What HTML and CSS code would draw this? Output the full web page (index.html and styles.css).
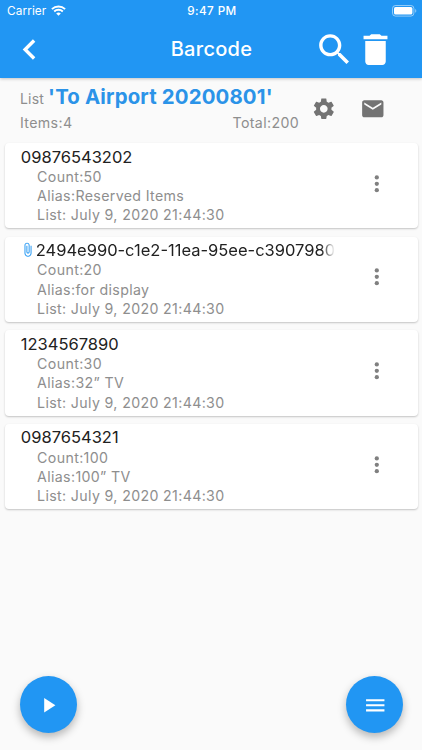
FILE: index.html
```html
<!DOCTYPE html>
<html lang="en">
<head>
    <meta charset="UTF-8">
    <meta name="viewport" content="width=device-width, initial-scale=1.0">
    <title>Barcode</title>
    <link rel="stylesheet" href="styles.css">
</head>
<body>
    <header class="header">
        <div class="status">
            <div class="carrier">
                <span>Carrier</span>
                <svg class="wifi" viewBox="0 0 15 11">
                    <path d="M.9 4.1a9.5 9.5 0 0 1 13.2 0M3.2 6.5a6.2 6.2 0 0 1 8.6 0" fill="none" stroke="#fff" stroke-width="1.9"/>
                    <path d="M7.5 10.8L5.2 8.5a3.3 3.3 0 0 1 4.6 0z" fill="#fff"/>
                </svg>
            </div>
            <div class="clock">9:47 PM</div>
            <div class="power">
                <svg class="battery" viewBox="0 0 25 12">
                    <rect x=".5" y=".5" width="21.4" height="10.6" rx="3" fill="none" stroke="#fff" stroke-opacity=".5"/>
                    <rect x="2" y="2" width="18.4" height="7.6" rx="1.6" fill="#fff"/>
                    <path d="M23.2 4v3.8c1.5-.6 1.5-3.2 0-3.8z" fill="#fff" fill-opacity=".5"/>
                </svg>
            </div>
        </div>
        <div class="toolbar">
            <svg class="icon-big" viewBox="0 0 24 24"><path d="M15.41 7.41L14 6l-6 6 6 6 1.41-1.41L10.83 12z"/></svg>
            <h1 class="title">Barcode</h1>
            <div class="actions">
                <svg class="icon-big" viewBox="0 0 24 24"><path d="M15.5 14h-.79l-.28-.27C15.41 12.59 16 11.11 16 9.5 16 5.91 13.09 3 9.5 3S3 5.91 3 9.5 5.91 16 9.5 16c1.61 0 3.09-.59 4.23-1.57l.27.28v.79l5 4.99L20.49 19l-4.99-5zm-6 0C7.01 14 5 11.99 5 9.5S7.01 5 9.5 5 14 7.01 14 9.5 11.99 14 9.5 14z"/></svg>
                <svg class="icon-big" viewBox="0 0 24 24"><path d="M6 19c0 1.1.9 2 2 2h8c1.1 0 2-.9 2-2V7H6v12zM19 4h-3.5l-1-1h-5l-1 1H5v2h14V4z"/></svg>
            </div>
        </div>
    </header>

    <section class="summary">
        <div class="summary-text">
            <div class="list-name"><span class="label">List</span><span class="name">'To Airport 20200801'</span></div>
            <div class="totals"><span>Items:4</span><span>Total:200</span></div>
        </div>
        <svg class="icon gear" viewBox="0 0 24 24"><path d="M19.14 12.94c.04-.3.06-.61.06-.94 0-.32-.02-.64-.07-.94l2.03-1.58c.18-.14.23-.41.12-.61l-1.92-3.32c-.12-.22-.37-.29-.59-.22l-2.39.96c-.5-.38-1.03-.7-1.62-.94l-.36-2.54c-.04-.24-.24-.41-.48-.41h-3.84c-.24 0-.43.17-.47.41l-.36 2.54c-.59.24-1.13.57-1.62.94l-2.39-.96c-.22-.08-.47 0-.59.22L2.74 8.87c-.12.21-.08.47.12.61l2.03 1.58c-.05.3-.09.63-.09.94s.02.64.07.94l-2.03 1.58c-.18.14-.23.41-.12.61l1.92 3.32c.12.22.37.29.59.22l2.39-.96c.5.38 1.03.7 1.62.94l.36 2.54c.05.24.24.41.48.41h3.84c.24 0 .44-.17.47-.41l.36-2.54c.59-.24 1.13-.56 1.62-.94l2.39.96c.22.08.47 0 .59-.22l1.92-3.32c.12-.22.07-.47-.12-.61l-2.01-1.58zM12 15.6c-1.98 0-3.6-1.62-3.6-3.6s1.62-3.6 3.6-3.6 3.6 1.62 3.6 3.6-1.62 3.6-3.6 3.6z"/></svg>
        <svg class="icon mail" viewBox="0 0 24 24"><path d="M20 4H4c-1.1 0-1.99.9-1.99 2L2 18c0 1.1.9 2 2 2h16c1.1 0 2-.9 2-2V6c0-1.1-.9-2-2-2zm0 4l-8 5-8-5V6l8 5 8-5v2z"/></svg>
    </section>

    <main class="cards">
        <article class="card">
            <div class="info">
                <div class="code">09876543202</div>
                <div class="detail">Count:50</div>
                <div class="detail">Alias:Reserved Items</div>
                <div class="detail">List: July 9, 2020 21:44:30</div>
            </div>
            <svg class="icon more" viewBox="0 0 24 24"><circle cx="12" cy="6" r="2"/><circle cx="12" cy="12" r="2"/><circle cx="12" cy="18" r="2"/></svg>
        </article>
        <article class="card">
            <div class="info">
                <div class="code attached">
                    <svg class="clip" viewBox="0 0 24 24"><path d="M16.5 6v11.5c0 2.21-1.79 4-4 4s-4-1.79-4-4V5c0-1.38 1.12-2.5 2.5-2.5s2.5 1.12 2.5 2.5v10.5c0 .55-.45 1-1 1s-1-.45-1-1V6H10v9.5c0 1.38 1.12 2.5 2.5 2.5s2.5-1.12 2.5-2.5V5c0-2.21-1.79-4-4-4S7 2.79 7 5v12.5c0 3.04 2.46 5.5 5.5 5.5s5.5-2.46 5.5-5.5V6h-1.5z"/></svg>
                    <span class="fade">2494e990-c1e2-11ea-95ee-c3907980</span>
                </div>
                <div class="detail">Count:20</div>
                <div class="detail">Alias:for display</div>
                <div class="detail">List: July 9, 2020 21:44:30</div>
            </div>
            <svg class="icon more" viewBox="0 0 24 24"><circle cx="12" cy="6" r="2"/><circle cx="12" cy="12" r="2"/><circle cx="12" cy="18" r="2"/></svg>
        </article>
        <article class="card">
            <div class="info">
                <div class="code">1234567890</div>
                <div class="detail">Count:30</div>
                <div class="detail">Alias:32” TV</div>
                <div class="detail">List: July 9, 2020 21:44:30</div>
            </div>
            <svg class="icon more" viewBox="0 0 24 24"><circle cx="12" cy="6" r="2"/><circle cx="12" cy="12" r="2"/><circle cx="12" cy="18" r="2"/></svg>
        </article>
        <article class="card">
            <div class="info">
                <div class="code">0987654321</div>
                <div class="detail">Count:100</div>
                <div class="detail">Alias:100” TV</div>
                <div class="detail">List: July 9, 2020 21:44:30</div>
            </div>
            <svg class="icon more" viewBox="0 0 24 24"><circle cx="12" cy="6" r="2"/><circle cx="12" cy="12" r="2"/><circle cx="12" cy="18" r="2"/></svg>
        </article>
    </main>

    <footer class="buttons">
        <button class="fab"><svg class="icon" viewBox="0 0 24 24"><path d="M8 5v14l11-7z"/></svg></button>
        <button class="fab"><svg class="icon" viewBox="0 0 24 24"><path d="M3 18h18v-2H3v2zm0-5h18v-2H3v2zm0-7v2h18V6H3z"/></svg></button>
    </footer>
</body>
</html>
```
FILE: styles.css
```css
* {
    box-sizing: border-box;
}
body {
    display: flex;
    flex-direction: column;
    height: 750px;
    margin: 0;
    overflow: hidden;
    font-family: Inter, "Liberation Sans", sans-serif;
    background-color: #fafafa;
}
svg {
    display: block;
    flex: none;
}
.header {
    height: 77.5px;
    color: #fff;
    background: #2196f3;
    box-shadow: 0 1px 3px rgba(0, 0, 0, 0.22);
}
.status {
    display: grid;
    grid-template-columns: 1fr auto 1fr;
    align-items: center;
    height: 22px;
    padding: 0 5px 0 7px;
    font-size: 11.8px;
}
.carrier {
    display: flex;
    align-items: center;
    gap: 5px;
    letter-spacing: 0.1px;
}
.wifi {
    width: 15px;
    height: 11px;
    margin-top: -2px;
}
.clock {
    font-weight: 500;
    font-size: 11.7px;
    letter-spacing: 0.4px;
}
.power {
    display: flex;
    justify-content: flex-end;
}
.battery {
    width: 25px;
    height: 12px;
}
.toolbar {
    display: grid;
    grid-template-columns: 1fr auto 1fr;
    align-items: center;
    height: 54px;
    padding: 0 26px 0 9px;
}
.icon-big {
    width: 41px;
    height: 41px;
    fill: #fff;
}
.title {
    margin: 0 0 0 18px;
    font-size: 20px;
    font-weight: 500;
    letter-spacing: 0.3px;
}
.actions {
    display: flex;
    justify-content: flex-end;
}
.icon {
    width: 25.6px;
    height: 25.6px;
    fill: #737373;
}
.summary {
    display: flex;
    align-items: center;
    height: 65.5px;
    padding: 0 36.5px 3px 20px;
}
.summary-text {
    width: 279px;
    margin-right: 12px;
}
.list-name {
    display: flex;
    align-items: baseline;
    gap: 4px;
    height: 28px;
    line-height: 30px;
    white-space: nowrap;
}
.label,
.totals {
    font-size: 14.2px;
    font-weight: 400;
    letter-spacing: 0.35px;
    color: #8e8e8e;
}
.label {
    font-size: 14px;
    letter-spacing: 0.2px;
}
.name {
    font-size: 20.4px;
    font-weight: 700;
    letter-spacing: 0.15px;
    color: #2b93e8;
}
.totals {
    display: flex;
    justify-content: space-between;
    height: 25px;
    line-height: 26px;
}
.mail {
    margin-left: auto;
}
.cards {
    display: flex;
    flex-direction: column;
    gap: 8.2px;
    padding: 0 4.5px;
}
.card {
    display: flex;
    align-items: center;
    justify-content: space-between;
    height: 85.4px;
    padding: 0 28px 0 16.3px;
    background: #fff;
    border-radius: 4px;
    box-shadow: 0 1px 2px rgba(0, 0, 0, 0.22);
}
.info {
    width: 314.5px;
    padding-bottom: 1px;
}
.code {
    height: 21.3px;
    line-height: 22px;
    font-size: 16.5px;
    color: #212121;
    white-space: nowrap;
}
.attached {
    display: flex;
    align-items: center;
}
.clip {
    width: 15.4px;
    height: 15.4px;
    margin-left: -0.5px;
    fill: #2196f3;
}
.fade {
    padding-top: 0.7px;
    overflow: hidden;
    -webkit-mask-image: linear-gradient(to right, #000 calc(100% - 14px), transparent);
    mask-image: linear-gradient(to right, #000 calc(100% - 14px), transparent);
}
.detail {
    height: 19.3px;
    padding-left: 16.3px;
    line-height: 19.3px;
    font-size: 14.2px;
    font-weight: 400;
    letter-spacing: 0.35px;
    color: #8e8e8e;
}
.more {
    margin-bottom: 4px;
    fill: #808080;
}
.buttons {
    display: flex;
    justify-content: space-between;
    margin-top: auto;
    padding: 0 18.7px 16.7px 19.5px;
}
.fab {
    display: flex;
    align-items: center;
    justify-content: center;
    width: 57px;
    height: 57px;
    padding: 0;
    border: 0;
    border-radius: 50%;
    background: #2196f3;
    box-shadow: 0 4px 8px rgba(0, 0, 0, 0.28);
}
.fab .icon {
    width: 24.5px;
    height: 24.5px;
    fill: #fff;
}
```
